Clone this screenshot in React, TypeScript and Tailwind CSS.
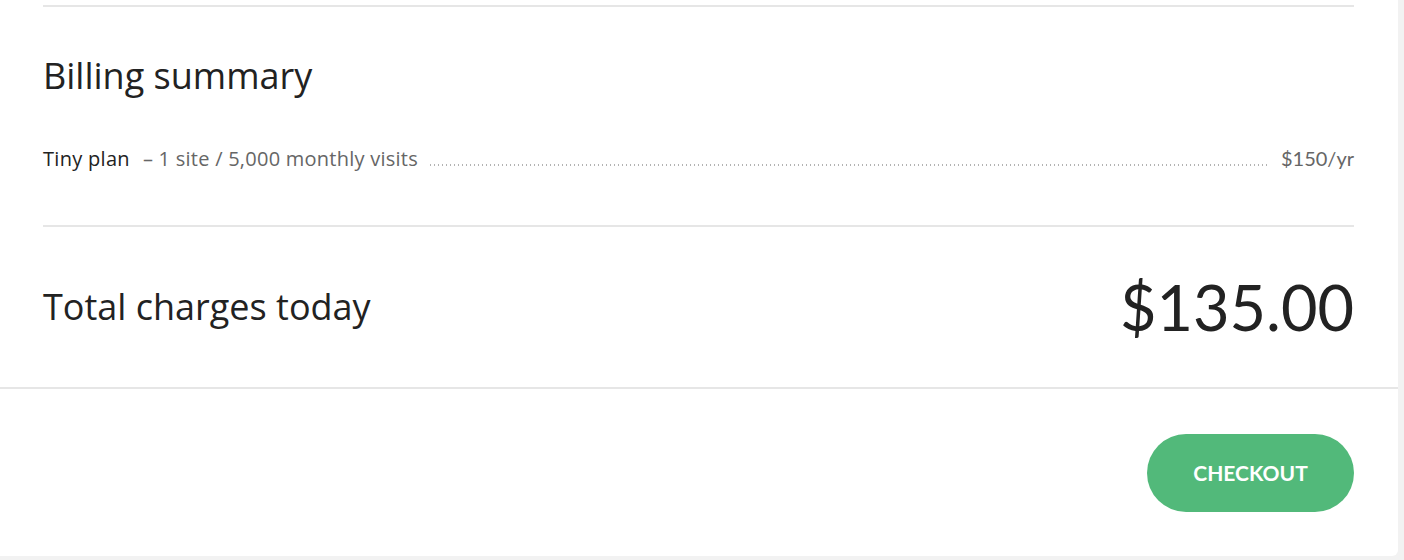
import React from "react";

const lato = { fontFamily: "Lato, 'Open Sans', sans-serif" };
const open = { fontFamily: "'Open Sans', Lato, sans-serif" };

export default function App() {
  return (
    <div className="h-[560px] w-full bg-[#f2f2f2]" style={lato}>
      <div className="flex h-[556px] w-[1398px] flex-col rounded-br-md bg-white">
        <section className="px-[43px] pr-[44px]">
          <div className="mt-[5px] border-t-2 border-[#e6e6e6] pt-[48px]">
            <h2 className="text-[36px] leading-[42px] text-[#222]" style={open}>
              Billing summary
            </h2>
          </div>

          <div className="mt-[48px] flex items-baseline text-[20px] leading-[26px]">
            <span className="font-medium tracking-[0.3px] text-[#222]" style={open}>Tiny plan</span>
            <span className="ml-[13px] tracking-[0.25px] text-[#666]" style={open}>
              – 1 site / 5,000 monthly visits
            </span>
            <div className="mx-[12px] h-[2px] flex-1 bg-[linear-gradient(to_right,#b3b3b3_1px,transparent_1px)] bg-[length:4px_2px] bg-repeat-x" />
            <span className="text-[#666]">$150/yr</span>
          </div>

          <div className="mt-[53px] flex items-center justify-between border-t-2 border-[#e6e6e6] pt-[48px] pb-[48px]">
            <span className="text-[36px] leading-[42px] text-[#222]" style={open}>
              Total charges today
            </span>
            <span className="text-[63px] leading-[64px] text-[#222]">$135.00</span>
          </div>
        </section>

        <footer className="flex justify-end border-t-2 border-[#e6e6e6] px-[44px] pt-[45px]">
          <button className="h-[78px] w-[207px] rounded-full bg-[#52b97a] text-[21px] font-bold text-white">
            CHECKOUT
          </button>
        </footer>
      </div>
    </div>
  );
}
